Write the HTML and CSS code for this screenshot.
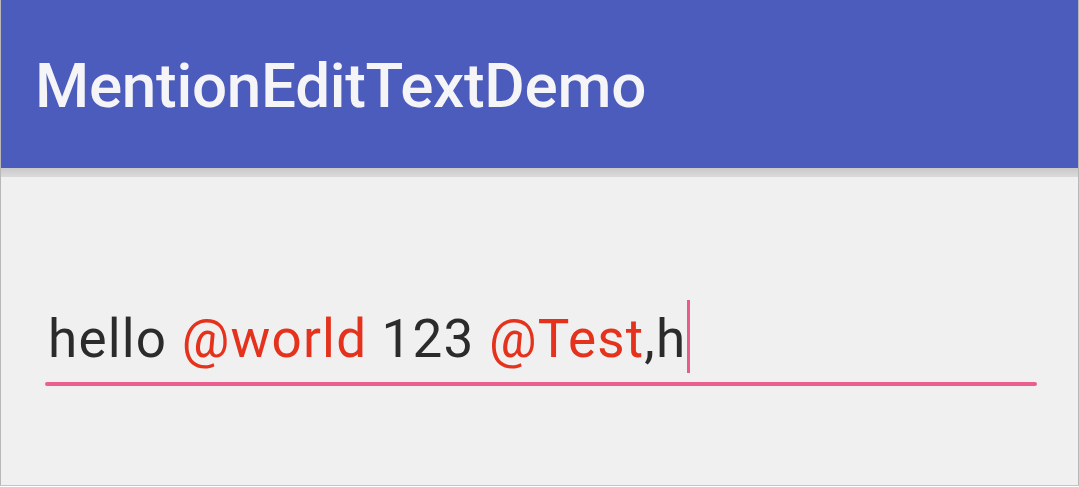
FILE: index.html
```html
<!DOCTYPE html>
<html>
<head>
<meta charset="utf-8">
<link rel="stylesheet" href="styles.css">
</head>
<body>
<div class="screen">
  <header class="appbar">
    <h1 class="title">MentionEditTextDemo</h1>
  </header>
  <div class="shadow"></div>
  <main class="content">
    <div class="edit">
      <div class="edit-text"><span class="txt">hello </span><span class="txt mention">@world</span><span class="txt"> 123 </span><span class="txt mention">@Test</span><span class="txt">,h</span><span class="cursor"></span></div>
      <div class="underline"></div>
    </div>
  </main>
</div>
</body>
</html>
```

FILE: styles.css
```css
html, body {
  margin: 0;
  padding: 0;
  background: #ffffff;
}
.screen {
  width: 1077px;
  height: 485px;
  background: #f0f0f0;
  border-left: 1px solid #b8b8b8;
  border-right: 1px solid #b8b8b8;
  border-bottom: 1px solid #c4c4c4;
  display: flex;
  flex-direction: column;
  overflow: hidden;
  font-family: Roboto, "Noto Sans", sans-serif;
}
.appbar {
  height: 168px;
  background: #4c5cbd;
  display: flex;
  align-items: center;
  padding-left: 34px;
  box-sizing: border-box;
  flex-shrink: 0;
}
.title {
  margin: 0;
  color: #f5f5f7;
  font-size: 62px;
  font-weight: 500;
  letter-spacing: -0.3px;
  line-height: 1;
  padding-top: 4px;
}
.shadow {
  height: 9px;
  flex-shrink: 0;
  background: linear-gradient(#c9c9c9, #d4d4d4 60%, #dadada);
}
.content {
  flex: 1;
  padding: 123px 41px 0 44px;
}
.edit {
  display: flex;
  flex-direction: column;
}
.edit-text {
  display: flex;
  align-items: flex-start;
  height: 73px;
  padding-left: 3px;
  white-space: pre;
}
.txt {
  font-size: 53px;
  line-height: 78px;
  letter-spacing: 1.2px;
  color: #2b2b2b;
}
.mention {
  color: #e5321c;
}
.cursor {
  width: 3px;
  height: 73px;
  background: #e85b8c;
  margin-left: 1px;
}
.underline {
  height: 4px;
  background: #ea5f8e;
  border-radius: 2px;
  margin-top: 9px;
}
```
